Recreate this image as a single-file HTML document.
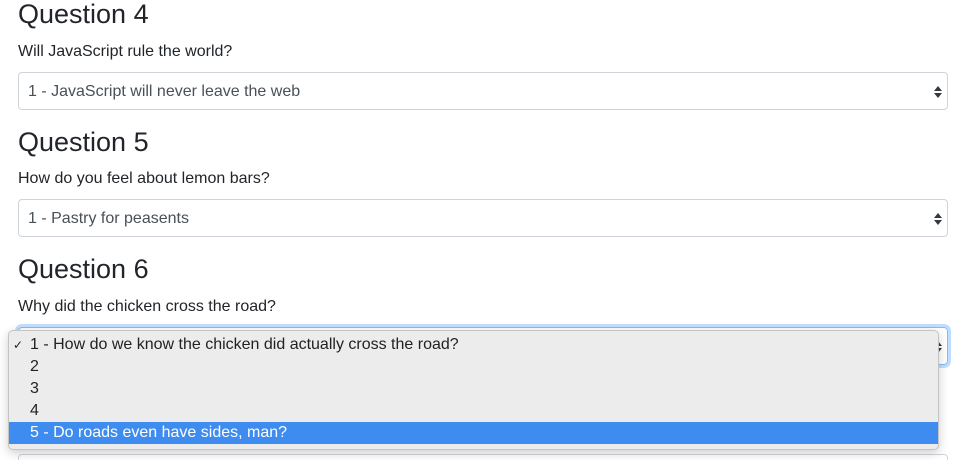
<!DOCTYPE html>
<html style="height:460px;overflow:hidden"><head><style>
body{margin:0;width:969px;height:460px;overflow:hidden;background:#fff;font-family:"Liberation Sans",sans-serif;color:#212529;position:relative}
.wrap{position:absolute;left:18px;top:-2px;width:930px}
h3{font-size:27px;font-weight:500;line-height:33.6px;margin:0 0 8px}
label{display:block;font-size:16px;line-height:24px;margin-bottom:8px}
.sel{height:38px;box-sizing:border-box;border:1px solid #ced4da;border-radius:4px;font-size:16px;line-height:38px;padding-left:9px;color:#495057;margin-bottom:16px;position:relative}
.sel.f{border-color:#80bdff;box-shadow:0 0 0 3px rgba(0,123,255,.25)}
.arr{position:absolute;right:5px;top:12px}
.dd{position:absolute;left:8px;top:330px;width:929px;height:118px;background:#ececec;border:1px solid #c4c4c4;border-radius:5px;box-shadow:0 3px 10px rgba(0,0,0,.2);font-size:16px;color:#222}
.o{height:22px;line-height:22px;padding-left:21px;position:relative}
.o.s{background:#3e8cf0;color:#fff}
.ck{position:absolute;left:4px;font-size:12px}
</style></head><body>
<div class="wrap">
<h3>Question 4</h3><label>Will JavaScript rule the world?</label>
<div class="sel">1 - JavaScript will never leave the web<svg class="arr" width="8" height="14" viewBox="0 0 8 14"><path d="M4 1L8 6H0Z M4 13L8 8H0Z" fill="#343a40"/></svg></div>
<h3>Question 5</h3><label>How do you feel about lemon bars?</label>
<div class="sel">1 - Pastry for peasents<svg class="arr" width="8" height="14" viewBox="0 0 8 14"><path d="M4 1L8 6H0Z M4 13L8 8H0Z" fill="#343a40"/></svg></div>
<h3>Question 6</h3><label>Why did the chicken cross the road?</label>
<div class="sel f"><svg class="arr" width="8" height="14" viewBox="0 0 8 14"><path d="M4 1L8 6H0Z M4 13L8 8H0Z" fill="#343a40"/></svg></div>
<h3 style="visibility:hidden">Question 7</h3><label style="visibility:hidden">x</label>
<div class="sel"></div>
</div>
<div class="dd">
<div style="height:3px"></div>
<div class="o"><span class="ck">✓</span>1 - How do we know the chicken did actually cross the road?</div>
<div class="o">2</div><div class="o">3</div><div class="o">4</div>
<div class="o s">5 - Do roads even have sides, man?</div>
</div>
</body></html>
